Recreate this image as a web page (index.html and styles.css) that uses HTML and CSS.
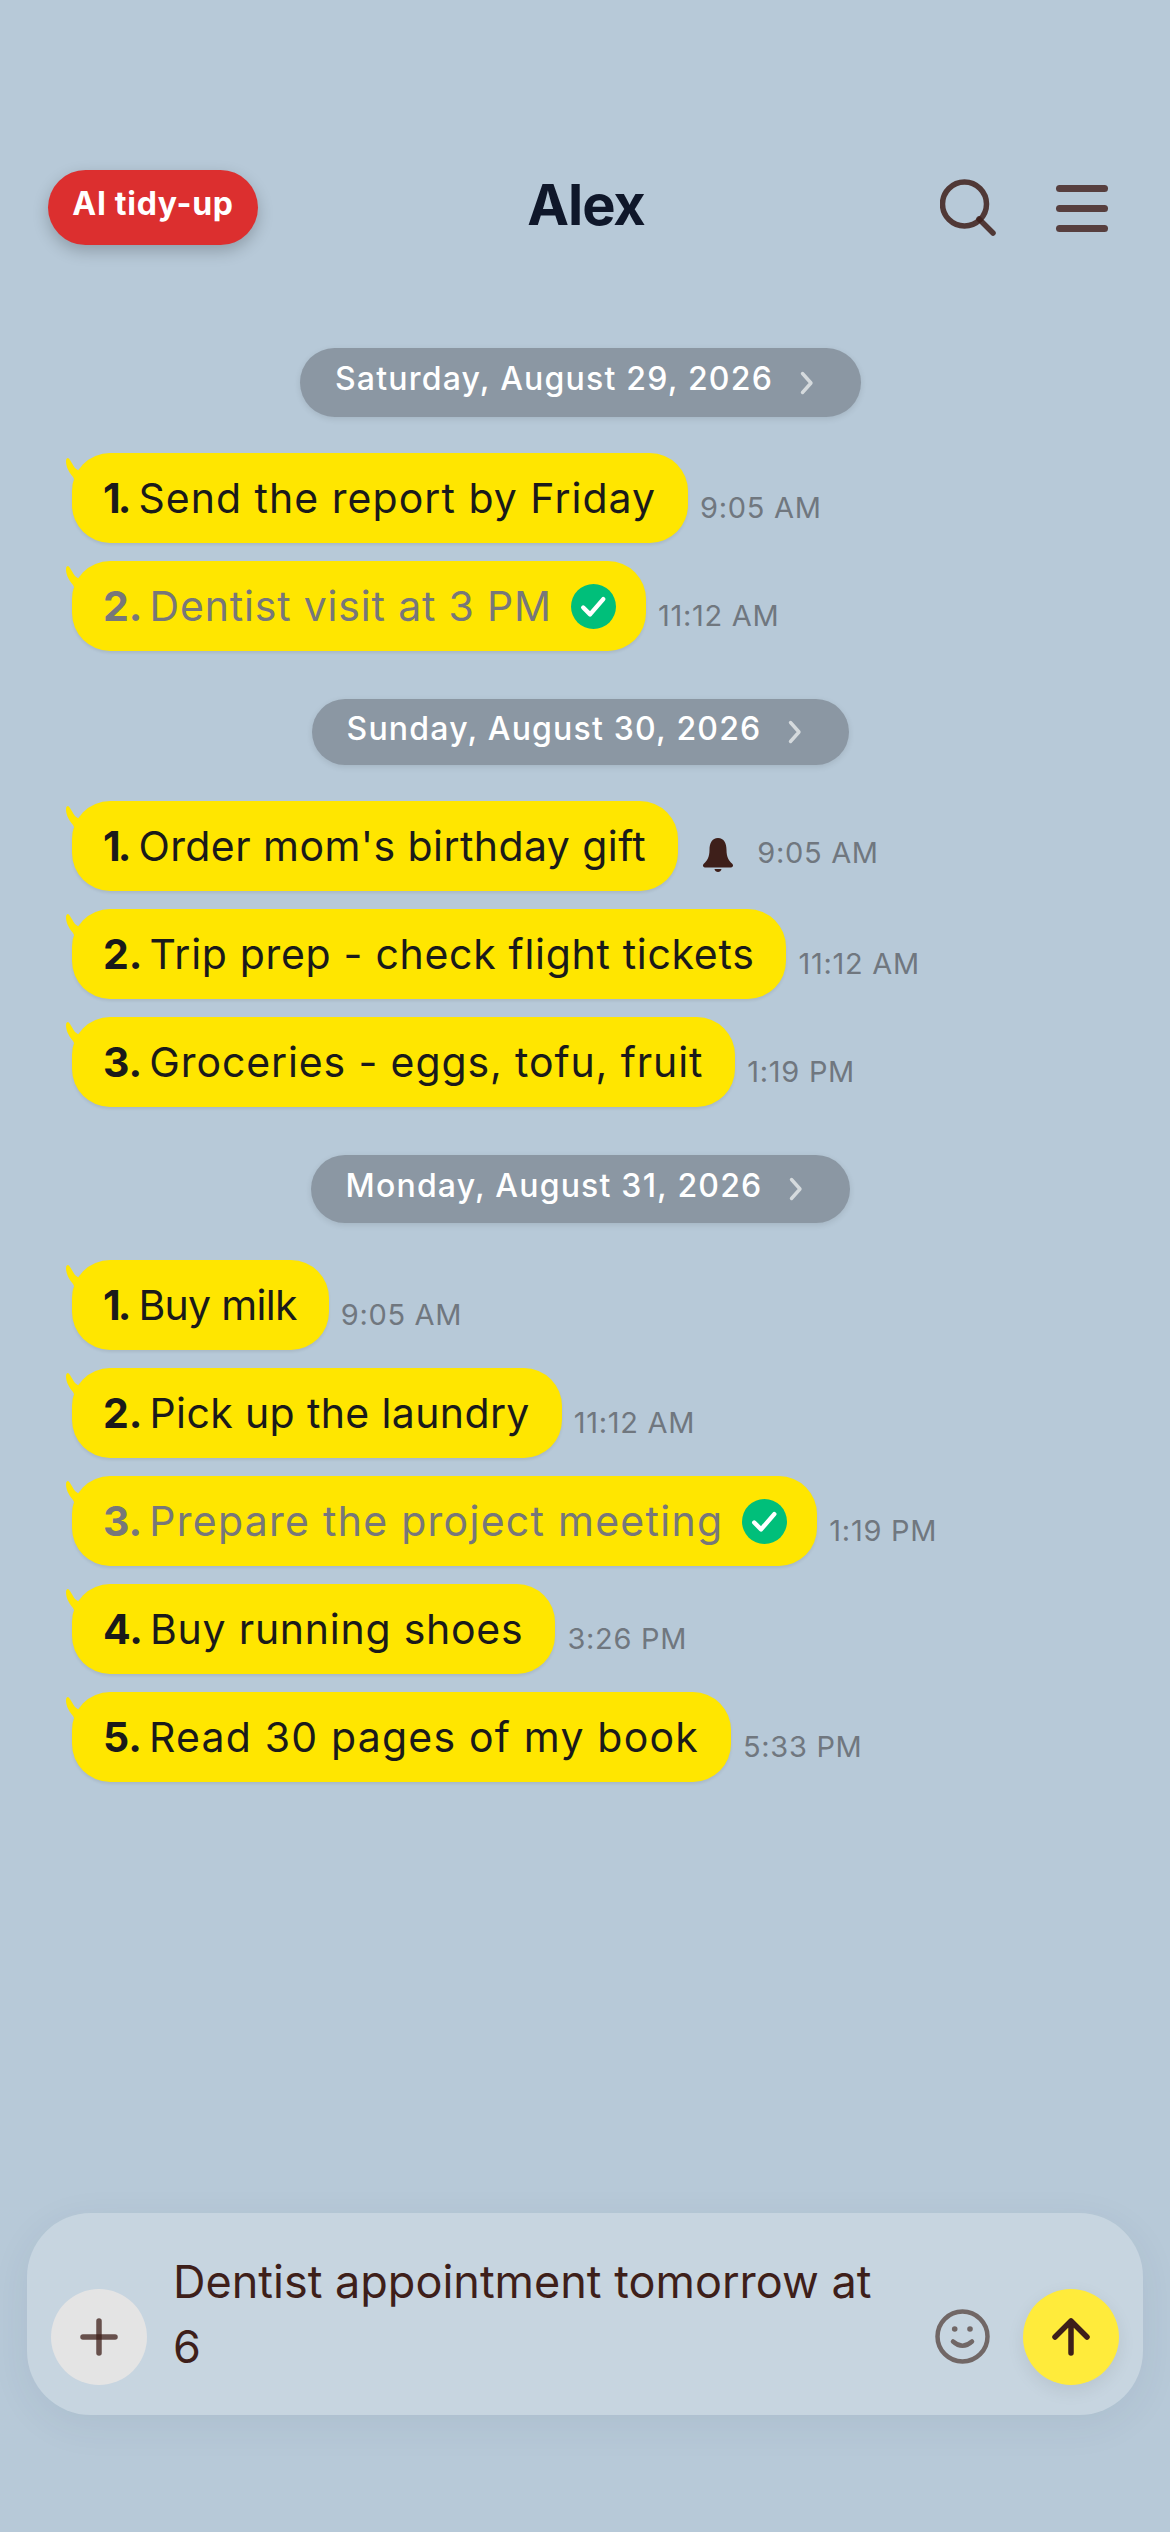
FILE: index.html
```html
<!DOCTYPE html>
<html lang="en">
<head>
<meta charset="utf-8">
<title>Alex</title>
<link rel="stylesheet" href="styles.css">
</head>
<body>
<div class="app">
  <header class="header">
    <div class="header-left"><button class="tidy">AI tidy-up</button></div>
    <h1 class="title">Alex</h1>
    <div class="header-right">
      <svg class="icon-search" viewBox="0 0 56 58"><circle cx="24.5" cy="25" r="22" fill="none" stroke="#3e1f1a" stroke-opacity=".85" stroke-width="5.5"/><path d="M39 40 L53 54" fill="none" stroke="#3e1f1a" stroke-opacity=".85" stroke-width="5.5" stroke-linecap="round"/></svg>
      <div class="icon-menu"><span></span><span></span><span></span></div>
    </div>
  </header>

  <main class="chat">
    <div class="date-row first"><div class="date"><span class="date-text">Saturday, August 29, 2026</span><svg class="chev" viewBox="0 0 14 24"><path d="M2.5 2.5 L11 12 L2.5 21.5" fill="none" stroke="#d5dadd" stroke-width="3.4" stroke-linecap="round" stroke-linejoin="round"/></svg></div></div>
    <div class="row"><div class="bubble t6"><svg class="tail" viewBox="0 0 20 26"><path d="M3 1 C5 2 6 5 10 11 L14 14 L10 24 L8 20 C3 14 1 9 1 4 C1 2 2 1 3 1 Z"/></svg><b class="one">1.</b>Send the report by Friday</div><span class="time">9:05 AM</span></div>
    <div class="row"><div class="bubble done t4"><svg class="tail" viewBox="0 0 20 26"><path d="M3 1 C5 2 6 5 10 11 L14 14 L10 24 L8 20 C3 14 1 9 1 4 C1 2 2 1 3 1 Z"/></svg><b>2.</b>Dentist visit at 3 PM<svg class="check" viewBox="0 0 46 46"><circle cx="23" cy="23" r="23" fill="#00bf7a"/><path d="M12.5 24 L19.5 31 L33 15.5" fill="none" stroke="#fff" stroke-width="4.5" stroke-linecap="round" stroke-linejoin="round"/></svg></div><span class="time">11:12 AM</span></div>

    <div class="date-row second"><div class="date"><span class="date-text">Sunday, August 30, 2026</span><svg class="chev" viewBox="0 0 14 24"><path d="M2.5 2.5 L11 12 L2.5 21.5" fill="none" stroke="#d5dadd" stroke-width="3.4" stroke-linecap="round" stroke-linejoin="round"/></svg></div></div>
    <div class="row"><div class="bubble t2"><svg class="tail" viewBox="0 0 20 26"><path d="M3 1 C5 2 6 5 10 11 L14 14 L10 24 L8 20 C3 14 1 9 1 4 C1 2 2 1 3 1 Z"/></svg><b class="one">1.</b>Order mom's birthday gift</div><svg class="bell" viewBox="0 0 32 34"><path d="M16 0 C10 0 7.5 5 7.5 12 C7.5 19 5 23 2 25.5 C0 27.5 1 29.5 4 29.5 L28 29.5 C31 29.5 32 27.5 30 25.5 C27 23 24.5 19 24.5 12 C24.5 5 22 0 16 0 Z" fill="#3e1f1a"/><path d="M12.5 31 C13 35 19 35 19.5 31 Z" fill="#3e1f1a"/></svg><span class="time">9:05 AM</span></div>
    <div class="row"><div class="bubble t3"><svg class="tail" viewBox="0 0 20 26"><path d="M3 1 C5 2 6 5 10 11 L14 14 L10 24 L8 20 C3 14 1 9 1 4 C1 2 2 1 3 1 Z"/></svg><b>2.</b>Trip prep - check flight tickets</div><span class="time">11:12 AM</span></div>
    <div class="row"><div class="bubble t5"><svg class="tail" viewBox="0 0 20 26"><path d="M3 1 C5 2 6 5 10 11 L14 14 L10 24 L8 20 C3 14 1 9 1 4 C1 2 2 1 3 1 Z"/></svg><b>3.</b>Groceries - eggs, tofu, fruit</div><span class="time">1:19 PM</span></div>

    <div class="date-row third"><div class="date"><span class="date-text">Monday, August 31, 2026</span><svg class="chev" viewBox="0 0 14 24"><path d="M2.5 2.5 L11 12 L2.5 21.5" fill="none" stroke="#d5dadd" stroke-width="3.4" stroke-linecap="round" stroke-linejoin="round"/></svg></div></div>
    <div class="row"><div class="bubble t0"><svg class="tail" viewBox="0 0 20 26"><path d="M3 1 C5 2 6 5 10 11 L14 14 L10 24 L8 20 C3 14 1 9 1 4 C1 2 2 1 3 1 Z"/></svg><b class="one">1.</b>Buy milk</div><span class="time">9:05 AM</span></div>
    <div class="row"><div class="bubble t1"><svg class="tail" viewBox="0 0 20 26"><path d="M3 1 C5 2 6 5 10 11 L14 14 L10 24 L8 20 C3 14 1 9 1 4 C1 2 2 1 3 1 Z"/></svg><b>2.</b>Pick up the laundry</div><span class="time">11:12 AM</span></div>
    <div class="row"><div class="bubble done t8"><svg class="tail" viewBox="0 0 20 26"><path d="M3 1 C5 2 6 5 10 11 L14 14 L10 24 L8 20 C3 14 1 9 1 4 C1 2 2 1 3 1 Z"/></svg><b>3.</b>Prepare the project meeting<svg class="check" viewBox="0 0 46 46"><circle cx="23" cy="23" r="23" fill="#00bf7a"/><path d="M12.5 24 L19.5 31 L33 15.5" fill="none" stroke="#fff" stroke-width="4.5" stroke-linecap="round" stroke-linejoin="round"/></svg></div><span class="time">1:19 PM</span></div>
    <div class="row"><div class="bubble t9"><svg class="tail" viewBox="0 0 20 26"><path d="M3 1 C5 2 6 5 10 11 L14 14 L10 24 L8 20 C3 14 1 9 1 4 C1 2 2 1 3 1 Z"/></svg><b>4.</b>Buy running shoes</div><span class="time">3:26 PM</span></div>
    <div class="row"><div class="bubble t7"><svg class="tail" viewBox="0 0 20 26"><path d="M3 1 C5 2 6 5 10 11 L14 14 L10 24 L8 20 C3 14 1 9 1 4 C1 2 2 1 3 1 Z"/></svg><b>5.</b>Read 30 pages of my book</div><span class="time">5:33 PM</span></div>
  </main>

  <footer class="composer">
    <div class="plus"><svg viewBox="0 0 38 38"><path d="M19 3 V35" fill="none" stroke="#3e1f1a" stroke-opacity=".75" stroke-width="5.5" stroke-linecap="round"/><path d="M3 19 H35" fill="none" stroke="#3e1f1a" stroke-opacity=".75" stroke-width="5.5" stroke-linecap="round"/></svg></div>
    <div class="input">Dentist appointment tomorrow at<br>6</div>
    <svg class="smile" viewBox="0 0 55 55"><circle cx="27.5" cy="27.5" r="25" fill="none" stroke="#716766" stroke-width="4.5"/><circle cx="19.7" cy="20" r="2.8" fill="#716766"/><circle cx="35" cy="20" r="2.8" fill="#716766"/><path d="M18 32.5 Q27.5 41 37 32.5" fill="none" stroke="#716766" stroke-width="4.5" stroke-linecap="round"/></svg>
    <div class="send"><svg viewBox="0 0 38 38"><path d="M19 35 V3 M3 19 L19 3 L35 19" fill="none" stroke="#3e1f1a" stroke-width="5.5" stroke-linecap="round" stroke-linejoin="round"/></svg></div>
  </footer>
</div>
</body>
</html>
```
FILE: styles.css
```css
* { box-sizing: border-box; }
html, body { margin: 0; padding: 0; }
body { background: #b7c9d8; font-family: Inter, "Noto Sans", sans-serif; color: #1a1a1a; }
.app { width: 1170px; height: 2532px; display: flex; flex-direction: column; overflow: hidden; }

.header { display: grid; grid-template-columns: 1fr auto 1fr; align-items: center; height: 75px; margin-top: 170px; padding: 0 48px; }
.header-left { display: flex; }
.tidy { width: 210px; height: 75px; border: 0; border-radius: 38px; background: #dc2f2f; color: #fff; font: 700 32px Inter, sans-serif; letter-spacing: .7px; padding: 0 0 8px; box-shadow: 0 6px 16px rgba(0,0,0,.22); }
.title { margin: 0; font-size: 56px; font-weight: 700; color: #0f172a; letter-spacing: -1px; line-height: 1; padding: 0 0 5px 2px; }
.header-right { display: flex; justify-content: flex-end; align-items: center; gap: 60px; margin-right: 14px; }
.icon-search { width: 56px; height: 58px; margin-top: 1px; }
.icon-menu { width: 52px; height: 47px; display: flex; flex-direction: column; justify-content: space-between; margin-top: 2px; }
.icon-menu span { height: 7px; border-radius: 4px; background: #573f3f; }

.chat { flex: 1; display: flex; flex-direction: column; padding: 103px 0 0 72px; }
.date-row { display: flex; justify-content: center; width: 1017px; }
.date-row.second { margin-top: 48px; }
.date-row.third { margin-top: 48px; margin-bottom: 1px; }
.date { height: 68px; display: flex; align-items: center; gap: 27px; padding: 0 47px 0 35px; border-radius: 35px; background: #8b97a3; color: #fff; font-size: 32px; font-weight: 500; letter-spacing: 1.2px; box-shadow: 0 2px 6px rgba(0,0,0,.1); }
.first .date { height: 69px; }
.second .date { height: 66px; }
.date-text { padding-bottom: 7px; }
.first .date-text { padding-bottom: 9px; }
.chev { width: 14px; height: 24px; flex: none; }

.row { display: flex; align-items: flex-end; margin-top: 18px; }
.date-row + .row { margin-top: 36px; }
.bubble { position: relative; height: 90px; display: flex; align-items: center; white-space: pre; padding: 0 32px 0 31px; border-radius: 38px; background: #ffe600; color: #1a1a1a; font-size: 41px; box-shadow: 0 2px 3px rgba(0,0,0,.08); }
.t0 { letter-spacing: -.7px; }
.t1 { letter-spacing: .37px; }
.t2 { letter-spacing: .43px; }
.t3 { letter-spacing: .69px; }
.t4 { letter-spacing: .82px; }
.t5 { letter-spacing: .88px; }
.t6 { letter-spacing: 1.03px; }
.t7 { letter-spacing: 1.2px; }
.t8 { letter-spacing: 1.27px; }
.t9 { letter-spacing: .75px; }
.bubble b { font-weight: 700; letter-spacing: 0; margin-right: 7px; }
.bubble b.one { letter-spacing: -3px; margin-right: 10px; }
.bubble.done { color: #77777a; padding-right: 30px; }
.tail { position: absolute; left: -7px; top: 4px; width: 20px; height: 26px; fill: #ffe600; }
.check { width: 45px; height: 45px; margin-left: 19px; flex: none; }
.time { margin: 0 0 17px 12px; font-size: 29px; letter-spacing: .7px; color: #70777f; line-height: 36px; }
.bell { width: 32px; height: 34px; margin: 0 0 19px 24px; }
.bell + .time { margin: 0 0 20px 23px; }

.composer { width: 1116px; height: 202px; margin: 0 0 117px 27px; display: flex; align-items: center; padding: 0 24px; border-radius: 64px; background: #c7d5e0; box-shadow: 0 10px 40px rgba(40,60,80,.07); }
.plus { width: 96px; height: 96px; border-radius: 50%; background: #e4e4e4; display: flex; align-items: center; justify-content: center; flex: none; align-self: flex-end; margin-bottom: 30px; }
.plus svg { width: 38px; height: 38px; }
.input { flex: 1; margin-left: 26px; font-size: 45px; line-height: 65px; color: #3e1f1a; white-space: nowrap; }
.smile { width: 55px; height: 55px; margin-right: 33px; flex: none; align-self: flex-end; margin-bottom: 51px; }
.send { width: 96px; height: 96px; border-radius: 50%; background: #ffeb3b; display: flex; align-items: center; justify-content: center; flex: none; align-self: flex-end; margin-bottom: 30px; box-shadow: 0 6px 18px rgba(0,0,0,.08); }
.send svg { width: 38px; height: 38px; }
```
